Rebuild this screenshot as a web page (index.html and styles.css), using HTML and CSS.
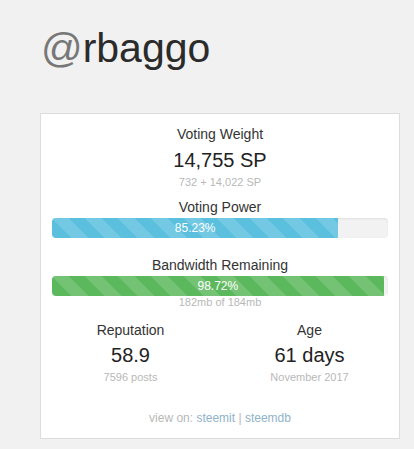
FILE: index.html
```html
<!DOCTYPE html>
<html>
<head>
<meta charset="utf-8">
<link rel="stylesheet" href="styles.css">
</head>
<body>
<h1 class="title"><span class="at">@</span>rbaggo</h1>
<div class="card">
  <div class="label">Voting Weight</div>
  <div class="value vw">14,755 SP</div>
  <div class="sub">732 + 14,022 SP</div>
  <div class="label vp">Voting Power</div>
  <div class="bar"><div class="fill info" style="width:85.23%">85.23%</div></div>
  <div class="label bw">Bandwidth Remaining</div>
  <div class="bar"><div class="fill success" style="width:98.72%">98.72%</div></div>
  <div class="sub mb">182mb of 184mb</div>
  <div class="stats">
    <div class="stat">
      <div class="label">Reputation</div>
      <div class="value">58.9</div>
      <div class="sub">7596 posts</div>
    </div>
    <div class="stat">
      <div class="label">Age</div>
      <div class="value">61 days</div>
      <div class="sub">November 2017</div>
    </div>
  </div>
  <div class="links">view on: <a href="#">steemit</a> | <a href="#">steemdb</a></div>
</div>
</body>
</html>
```

FILE: styles.css
```css
html, body {
  margin: 0;
  padding: 0;
  background: #f1f1f1;
}
body {
  padding: 26px 14px 0 40px;
  font-family: "Liberation Sans", Arial, sans-serif;
  color: #333;
}
.title {
  margin: 0 0 42px 1px;
  font-size: 41px;
  line-height: 45px;
  font-weight: normal;
  color: #2b2b2b;
}
.at {
  color: #777;
}
.card {
  box-sizing: border-box;
  width: 360px;
  height: 326px;
  background: #fff;
  border: 1px solid #dcdcdc;
  box-shadow: 0 1px 1px rgba(0,0,0,0.04);
  padding: 10px 11px 0 11px;
  text-align: center;
}
.label {
  font-size: 14px;
  line-height: 20px;
  color: #333;
}
.value {
  font-size: 20px;
  line-height: 24px;
  color: #222;
}
.vw {
  margin-top: 4px;
}
.sub {
  font-size: 11px;
  line-height: 14px;
  color: #b8b8b8;
  margin-top: 3px;
}
.vp {
  margin-top: 8px;
}
.bw {
  margin-top: 17px;
}
.bar {
  height: 20px;
  margin-top: 1px;
  background: #f2f2f2;
  border-radius: 4px;
  overflow: hidden;
  box-shadow: inset 0 1px 2px rgba(0,0,0,0.08);
  display: flex;
}
.bar + .label {
  margin-top: 17px;
}
.fill {
  height: 100%;
  color: #fff;
  font-size: 12px;
  line-height: 20px;
  text-align: center;
  background-image: linear-gradient(45deg, rgba(255,255,255,.15) 25%, transparent 25%, transparent 50%, rgba(255,255,255,.15) 50%, rgba(255,255,255,.15) 75%, transparent 75%, transparent);
  background-size: 33px 33px;
}
.info {
  background-color: #5bc0de;
}
.success {
  background-color: #5cb85c;
}
.mb {
  margin-top: 0;
  line-height: 13px;
}
.stats {
  display: grid;
  grid-template-columns: 1fr 1fr;
  margin: 11px -11px 0 -11px;
}
.stat .value {
  margin-top: 3px;
}
.links {
  margin-top: 26px;
  font-size: 12px;
  line-height: 16px;
  color: #b8b8b8;
}
.links a {
  color: #8fb3c9;
  text-decoration: none;
}
```
